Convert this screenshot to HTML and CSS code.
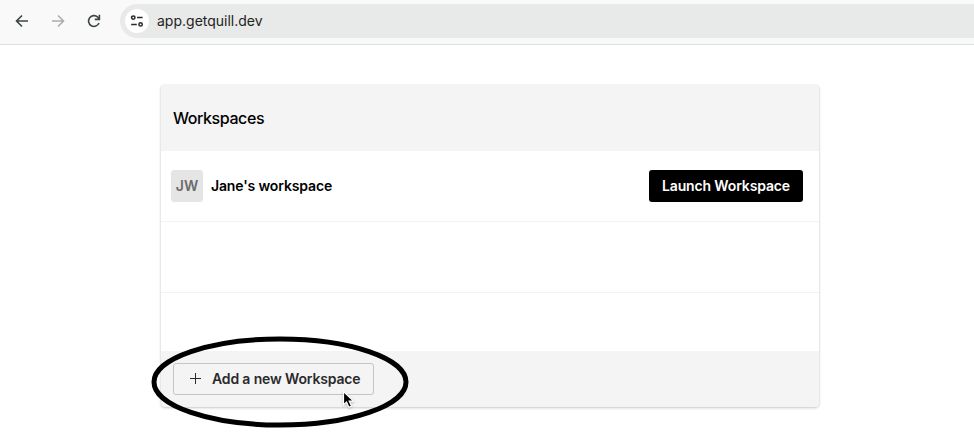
FILE: index.html
```html
<!DOCTYPE html>
<html lang="en">
<head>
<meta charset="utf-8">
<title>Workspaces</title>
<link rel="stylesheet" href="styles.css">
</head>
<body>
<header class="toolbar">
  <nav class="nav">
    <svg class="icon" viewBox="0 0 16 16"><path d="M14 8H3M8 2.5 2.5 8 8 13.5"/></svg>
    <svg class="icon disabled" viewBox="0 0 16 16"><path d="M2 8h11M8 2.5 13.5 8 8 13.5"/></svg>
    <svg class="icon" viewBox="0 0 16 16"><path d="M13 10A5.4 5.4 0 1 1 11.8 4.2L13.4 5.8M13.4 1.8v4.6H8.8"/></svg>
  </nav>
  <div class="address">
    <span class="site-info"><svg class="tune" viewBox="0 0 14 14"><circle cx="3.3" cy="3.6" r="1.7"/><path d="M7 3.6h5.6M1.2 10.4h5.6"/><circle cx="10.6" cy="10.4" r="1.7"/></svg></span>
    <span class="url">app.getquill.dev</span>
  </div>
</header>
<main class="card">
  <h1 class="card-header">Workspaces</h1>
  <ul class="rows">
    <li class="row">
      <span class="avatar">JW</span>
      <span class="name">Jane's workspace</span>
      <button class="launch"><span>Launch Workspace</span></button>
    </li>
    <li class="row"></li>
    <li class="row last"></li>
  </ul>
  <footer class="card-footer">
    <button class="add"><svg class="plus" viewBox="0 0 11 11"><path d="M5.5 0v11M0 5.5h11"/></svg><span class="add-text">Add a new Workspace</span></button>
  </footer>
</main>
<svg class="highlight" viewBox="0 0 258 92"><ellipse cx="129" cy="46" rx="126" ry="43"/></svg>
<svg class="cursor" viewBox="0 0 14 20"><path d="M1.5 1.5v13.4l3-2.8 2.4 5.2 2.6-1.2-2.3-5h4.3z"/></svg>
</body>
</html>
```
FILE: styles.css
```css
* { box-sizing: border-box; }
body {
  margin: 0;
  height: 445px;
  overflow: hidden;
  background: #fff;
  color: #000;
  font-family: Inter, sans-serif;
}
button { font: inherit; margin: 0; }
.toolbar {
  display: flex;
  height: 45px;
  padding: 4px 0 6px 14px;
  background: radial-gradient(circle at 6px 6px, #f9f9f9 8px, #d5e3e6 8.5px) 0 0 / 4px 4px no-repeat, #f9f9f9;
  border-bottom: 1px solid #dedfdf;
}
.nav { display: flex; align-items: center; gap: 20px; width: 106px; }
.icon {
  flex: none;
  width: 16px;
  height: 16px;
  fill: none;
  stroke: #3d4543;
  stroke-width: 1.6;
}
.disabled { stroke: #a9adab; }
.address {
  display: flex;
  align-items: center;
  flex: 1;
  height: 34px;
  padding-left: 5px;
  border-radius: 17px 0 0 17px;
  background: #e8eae9;
}
.site-info {
  display: flex;
  align-items: center;
  justify-content: center;
  width: 24px;
  height: 24px;
  border-radius: 50%;
  background: #fff;
}
.tune { width: 14px; height: 14px; fill: none; stroke: #262a29; stroke-width: 1.5; }
.url { margin-left: 8px; padding-bottom: 2px; font-size: 14px; color: #1f2322; }
.card {
  width: 658px;
  height: 322px;
  margin: 40px 0 0 161px;
  border-radius: 4px;
  overflow: hidden;
  background: #fff;
  box-shadow: 0 0 1px rgba(0,0,0,.22), 0 1px 3px rgba(0,0,0,.2);
}
.card-header {
  height: 66px;
  margin: 0;
  padding-left: 12px;
  background: #f4f4f4;
  font-size: 16px;
  font-weight: 500;
  letter-spacing: -.42px;
  line-height: 66px;
}
.rows { margin: 0; padding: 0; list-style: none; }
.row {
  display: flex;
  align-items: center;
  height: 71px;
  padding: 0 16px 0 10px;
  border-bottom: 1px solid #f3f3f3;
}
.last { height: 58px; border: 0; }
.avatar {
  width: 32px;
  height: 32px;
  border-radius: 3px;
  background: #e5e5e5;
  color: #6b6b6b;
  font-size: 14px;
  font-weight: 600;
  line-height: 32px;
  text-align: center;
}
.name {
  margin-left: 8px;
  padding-bottom: 2px;
  font-size: 14px;
  font-weight: 600;
  letter-spacing: -.14px;
}
.launch {
  width: 154px;
  height: 32px;
  margin-left: auto;
  padding: 0 0 2px;
  border: 0;
  border-radius: 3px;
  background: #000;
  color: #fff;
  font-size: 14px;
  font-weight: 600;
  letter-spacing: -.14px;
}
.card-footer { height: 56px; padding: 12px; background: #f4f4f4; }
.add {
  display: flex;
  align-items: center;
  width: 201px;
  height: 32px;
  padding: 0 0 0 16px;
  border: 1px solid #c4c4c4;
  border-radius: 3px;
  background: #f4f4f4;
  color: #2a2a2a;
  font-size: 14px;
  font-weight: 600;
}
.plus { width: 11px; height: 11px; margin-bottom: 1px; stroke: #2a2a2a; stroke-width: 1; }
.add-text {
  margin-left: 11px;
  padding-bottom: 2px;
  letter-spacing: -.15px;
  white-space: nowrap;
}
.highlight {
  position: absolute;
  left: 151px;
  top: 336px;
  width: 258px;
  height: 92px;
  fill: none;
  stroke: #000;
  stroke-width: 5;
}
.cursor {
  position: absolute;
  left: 342px;
  top: 390px;
  width: 14px;
  height: 20px;
  fill: #000;
  stroke: #fff;
  stroke-width: 1.2;
  filter: drop-shadow(0 1px 1px rgba(0,0,0,.25));
}
```
